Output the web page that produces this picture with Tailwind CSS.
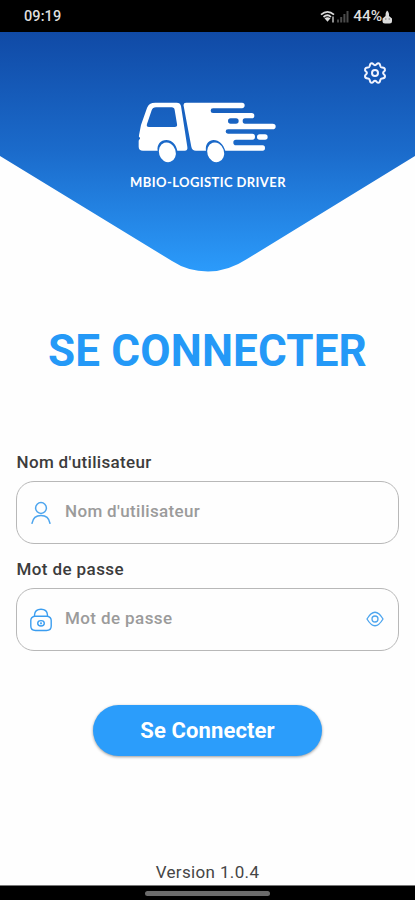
<!DOCTYPE html>
<html lang="fr">
<head>
<meta charset="utf-8">
<meta name="viewport" content="width=device-width, initial-scale=1">
<title>MBIO-Logistic Driver</title>
<script src="https://cdn.jsdelivr.net/npm/@tailwindcss/browser@4"></script>
</head>
<body class="bg-white">
<div class="relative flex h-[900px] w-[415px] flex-col overflow-hidden bg-[#fefefe] font-['Roboto',sans-serif]">
  <!-- Status bar -->
  <div class="flex h-8 shrink-0 items-center justify-between bg-black pl-[24px] pr-[22px] text-[#dedede]">
    <span class="pt-[2px] text-[14.5px] font-medium leading-none tracking-[0.1px]">09:19</span>
    <div class="flex items-center pt-px">
      <svg class="h-[14px] w-[16px]" viewBox="0 0 16 14" fill="none" stroke="#dcdcdc" stroke-width="1.700"><path d="M1 4.600Q7.500-1 14 4.600M3.500 7Q7.500 3.500 11 7"/><path d="M4.500 8.200Q7.500 6.200 10.500 8.200L7.500 11.700Z" fill="#dcdcdc" stroke="none"/><path d="M13 6.500V12.500" stroke-width="1.300"/></svg>
      <svg class="h-[13px] w-[13px]" viewBox="0 0 13 13" stroke="#4b4b4b" stroke-width="2"><path d="M2 9.500V12.500M5.200 7V12.500M8.400 4V12.500M11.500 1V12.500"/></svg>
      <span class="ml-[4px] text-[15.500px] font-medium leading-none tracking-[-0.1px]">44%</span>
      <svg class="h-[14px] w-[11px]" viewBox="0 0 11 14"><path d="M5 .5Q7.500 2.500 7 6L10 8.500V11Q10 13.500 7.500 13.500H3Q.5 13.500.5 11V8.500L3.500 6Q3 3 5 .5Z" fill="#dcdcdc"/><path d="M3 9H4.500M6.500 9H8" stroke="#777"/></svg>
    </div>
  </div>

  <!-- Header -->
  <header class="relative h-[241px] shrink-0">
    <svg class="absolute inset-0 h-[241px] w-[415px]" viewBox="0 0 415 241">
      <defs><linearGradient id="sky" x1="0" y1="0" x2="0" y2="1"><stop offset="0" stop-color="#104aa6"/><stop offset=".5" stop-color="#1b6bcb"/><stop offset="1" stop-color="#2b9bfb"/></linearGradient></defs>
      <path d="M0 0H415V124L247 227Q228 239.500 208 239.500T172 229L0 124Z" fill="url(#sky)"/>
    </svg>
    <div class="relative flex flex-col items-center pt-[66px]">
      <svg class="h-[67px] w-[144px]" viewBox="50 24 432 201" fill="#fff">
        <path fill-rule="evenodd" d="M108 38H172Q183 38 185 48L204 171Q206 182 196 182H174C170 163 158 150 141 150C124 150 112 164 115 182H71Q58 182 58 170V153Q58 149 62 147V143Q57 141 59 136L65 105L83 54Q88 38 108 38ZM110 52Q100 52 97 61L83 102Q80 111 89 111H166Q175 111 173 102L166 60Q165 52 157 52Z"/>
        <path fill-rule="evenodd" d="M200 38H368Q376 38 376 46T368 55H281Q274 55 274 62T281 69H397Q405 69 405 77T397 85H377Q370 85 370 93T377 101H460Q469 101 469 109.500T460 118H326Q319 118 319 124.500T326 131H399Q407 131 407 140T399 149H350Q342 149 342 157.500T350 166H430Q437 166 437 174T430 182H318C312 163 299 150 283 150C267 150 257 164 260 182H230Q218 182 216 170L193 48Q191 38 200 38ZM334 85Q326 85 326 93T334 101H350Q358 101 358 93T350 85Z"/>
        <rect x="413" y="133" width="32" height="16" rx="8"/>
        <ellipse cx="144" cy="187" rx="25" ry="30" transform="rotate(-18 144 187)"/>
        <ellipse cx="289" cy="187" rx="25" ry="30" transform="rotate(-18 289 187)"/>
      </svg>
      <div class="mt-[9px] whitespace-nowrap pl-px font-['Lato',sans-serif] text-[13px] font-bold leading-[16px] tracking-[0.4px] text-white">MBIO-LOGISTIC DRIVER</div>
    </div>
    <button aria-label="Paramètres" class="absolute right-[28px] top-[29px]">
      <svg class="block h-6 w-6" viewBox="0 0 24 24" fill="none" stroke="#f1f4ff" stroke-width="2" stroke-linejoin="round"><path d="M7.200 3.200Q8.800 1.300 10.300 3.200Q12 5.400 13.700 3.200Q15.200 1.300 16.800 3.200L17.500 5.500Q17.900 6.600 19.200 6.500Q21.700 6.600 22 8.500Q22.300 9.700 20.900 10.600Q19.300 12 20.900 13.400Q22.300 14.300 22 15.500Q21.700 17.400 19.200 17.500Q17.900 17.400 17.500 18.500L16.800 20.800Q15.200 22.700 13.700 20.800Q12 18.600 10.300 20.800Q8.800 22.700 7.200 20.800L6.500 18.500Q6.100 17.400 4.800 17.500Q2.300 17.400 2 15.500Q1.700 14.300 3.100 13.400Q4.700 12 3.100 10.600Q1.700 9.700 2 8.500Q2.300 6.600 4.800 6.500Q6.100 6.600 6.500 5.500Z"/><circle cx="12" cy="12" r="3"/></svg>
    </button>
  </header>

  <main class="flex flex-1 flex-col px-4">
    <h1 class="mt-[52px] whitespace-nowrap text-center text-[44px] font-bold leading-[52px] tracking-[0.150px] text-[#2499f7]">SE CONNECTER</h1>
    <label class="mt-[75px] pl-[0.500px] text-[17px] font-medium leading-5 tracking-[0.340px] text-[#3c3c3c]">Nom d'utilisateur</label>
    <div class="mt-[9px] flex h-[63px] items-center rounded-[18px] border-[1.5px] border-[#b8b8b8] px-[13px]">
      <svg class="h-[24px] w-[22px]" viewBox="0 0 22 24" fill="none" stroke="#4da5ee" stroke-width="1.500" stroke-linecap="round"><circle cx="11" cy="7" r="5.400"/><path d="M2 22.300C3 16.500 6.500 14.500 11 14.500S19 16.500 20 22.300"/></svg>
      <span class="ml-[13px] pb-[4px] text-[17px] font-medium leading-5 tracking-[0.340px] text-[#9b9b9b]">Nom d'utilisateur</span>
    </div>
    <label class="mt-[15px] pl-[0.500px] text-[17px] font-medium leading-5 tracking-[0.400px] text-[#3c3c3c]">Mot de passe</label>
    <div class="mt-[9px] flex h-[63px] items-center rounded-[18px] border-[1.5px] border-[#b8b8b8] px-[13px]">
      <svg class="h-[24px] w-[22px]" viewBox="0 0 22 24" fill="none" stroke="#3a9df0" stroke-width="1.400"><path d="M4.500 8.200C1.500 9 .8 10.500.8 12.500V18Q.8 22.500 5.500 22.500H16.500Q21.200 22.500 21.200 18V12.500C21.200 10.500 20.500 9 17.500 8.200ZM4.500 8.200V7Q5 1.300 11 1.300T17.500 7V8.200"/><ellipse cx="11" cy="15.300" rx="3.300" ry="2.700"/><circle cx="11" cy="15.300" r=".4"/></svg>
      <span class="ml-[13px] pb-[4px] text-[17px] font-medium leading-5 tracking-[0.400px] text-[#9b9b9b]">Mot de passe</span>
      <svg class="relative -top-px ml-auto mr-[1px] h-[16px] w-[18px]" viewBox="0 0 18 16" fill="none" stroke="#4da5ee" stroke-width="1.300"><path d="M1 8Q9-5.500 17 8Q9 21.500 1 8Z"/><circle cx="9" cy="8" r="3"/></svg>
    </div>
    <button class="ml-[77px] mt-[54px] h-[51px] w-[229px] rounded-full bg-[#2b9dfb] text-[22px] font-bold leading-none tracking-[0.100px] text-white shadow-[0_1px_3px_rgba(0,0,0,0.4)]">Se Connecter</button>
    <div class="mb-[1px] mt-auto text-center text-[17px] leading-6 tracking-[0.350px] text-[#454545]">Version 1.0.4</div>
  </main>

  <!-- Navigation bar -->
  <div class="flex h-[15px] shrink-0 justify-center border-t border-[#777] bg-black pt-[5px]">
    <div class="h-[5px] w-[125px] rounded-full bg-[#6b6b6b]"></div>
  </div>
</div>
</body>
</html>
